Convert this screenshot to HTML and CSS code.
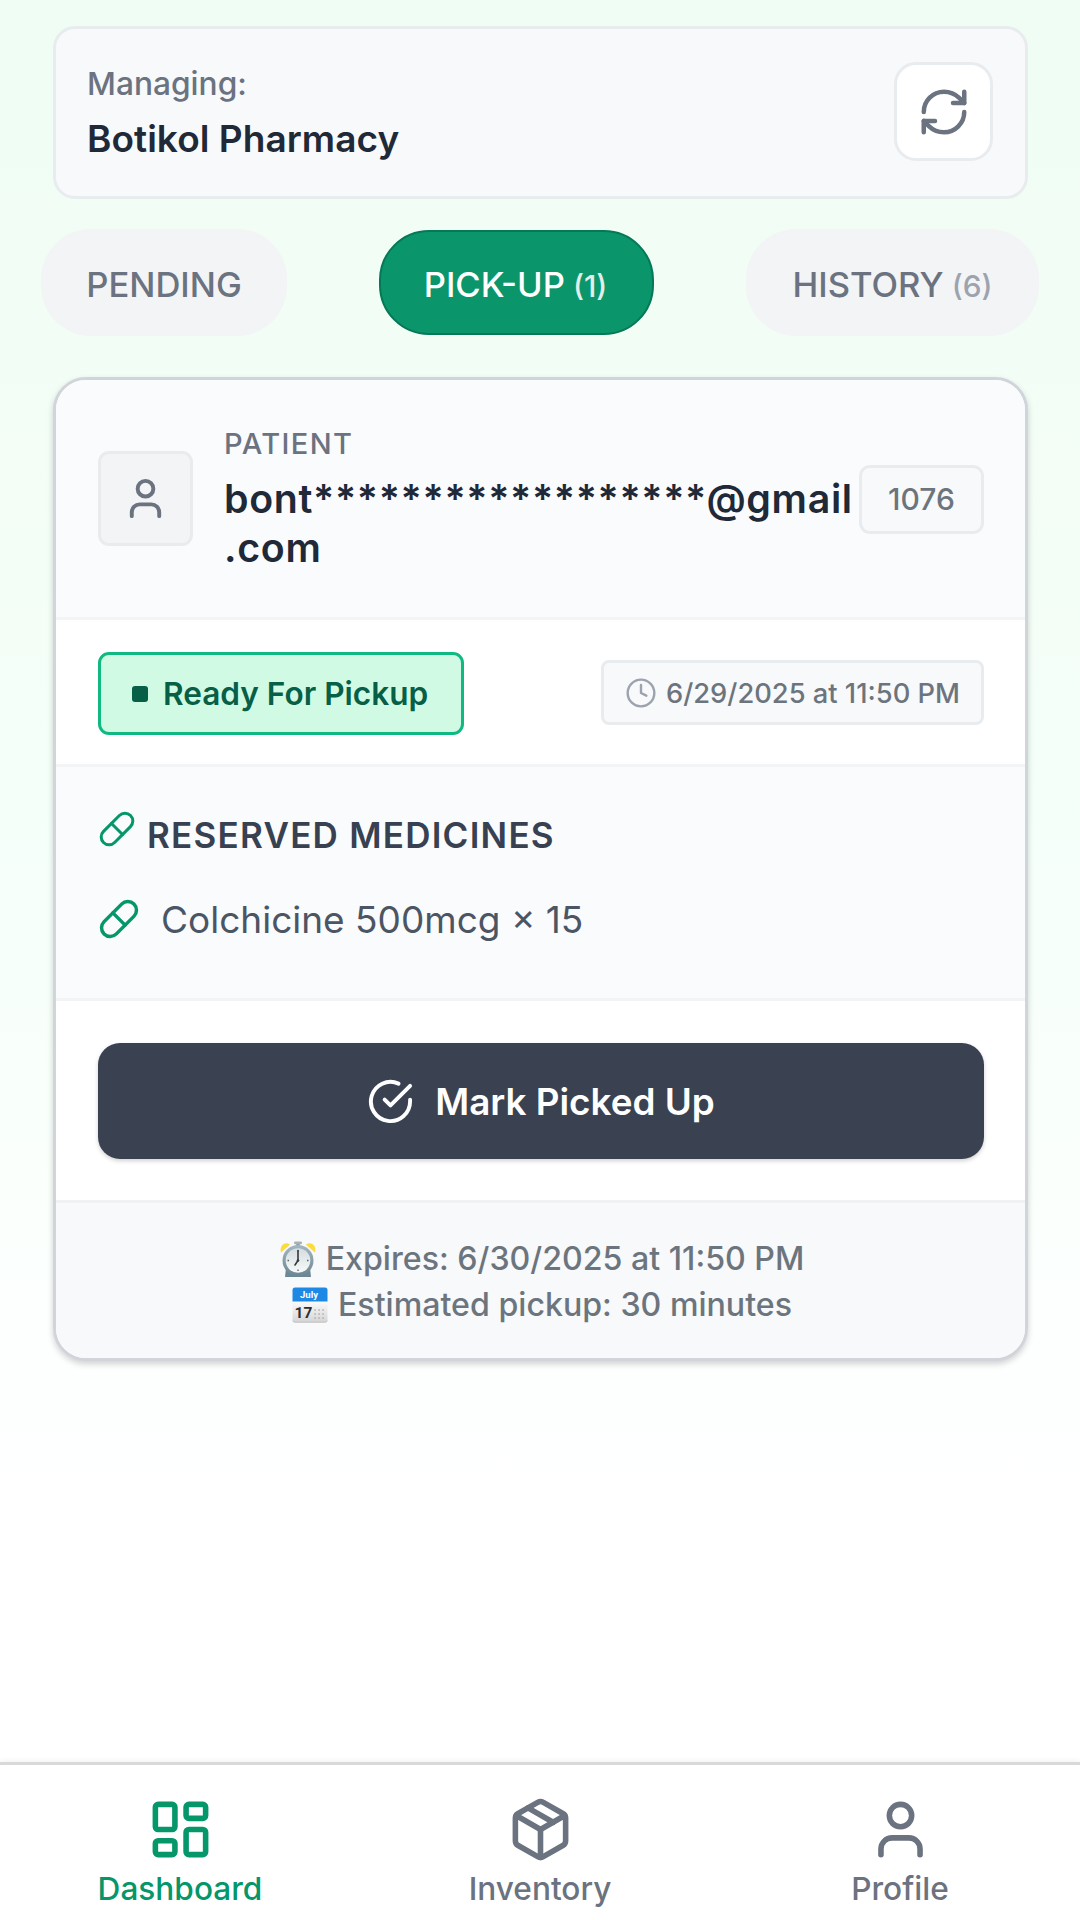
FILE: index.html
```html
<!DOCTYPE html>
<html lang="en">
<head>
<meta charset="utf-8">
<title>Botikol Pharmacy</title>
<link rel="stylesheet" href="styles.css">
</head>
<body>
<div class="screen">
  <header class="managing">
    <div class="managing-text">
      <span class="managing-label">Managing:</span>
      <span class="managing-name">Botikol Pharmacy</span>
    </div>
    <button class="refresh" aria-label="Refresh">
      <svg class="icon" width="54" height="54" viewBox="0 0 24 24"><path d="M3 12a9 9 0 0 1 9-9 9.75 9.75 0 0 1 6.74 2.74L21 8"/><path d="M21 3v5h-5"/><path d="M21 12a9 9 0 0 1-9 9 9.75 9.75 0 0 1-6.74-2.74L3 16"/><path d="M8 16H3v5"/></svg>
    </button>
  </header>

  <nav class="tabs">
    <button class="tab tab-pending"><span>PENDING</span></button>
    <button class="tab tab-active"><span>PICK-UP</span><span class="count">(1)</span></button>
    <button class="tab tab-history"><span>HISTORY</span><span class="count">(6)</span></button>
  </nav>

  <article class="card">
    <section class="patient">
      <div class="avatar">
        <svg class="icon" width="47" height="47" viewBox="0 0 24 24"><path d="M19 21v-2a4 4 0 0 0-4-4H9a4 4 0 0 0-4 4v2"/><circle cx="12" cy="7" r="4"/></svg>
      </div>
      <div class="patient-info">
        <span class="patient-label">PATIENT</span>
        <span class="patient-email">bont******************@gmail<br>.com</span>
      </div>
      <span class="code">1076</span>
    </section>

    <section class="status-row">
      <div class="status"><i class="status-dot"></i><span>Ready For Pickup</span></div>
      <div class="date">
        <svg class="icon clock" width="32" height="32" viewBox="0 0 24 24"><circle cx="12" cy="12" r="10"/><path d="M12 6v6l4 2"/></svg>
        <span>6/29/2025 at 11:50 PM</span>
      </div>
    </section>

    <section class="medicines">
      <h2 class="medicines-title">
        <svg class="icon pill" width="38" height="38" viewBox="0 0 24 24"><path d="m10.5 20.5 10-10a4.95 4.95 0 1 0-7-7l-10 10a4.95 4.95 0 1 0 7 7Z"/><path d="m8.5 8.5 7 7"/></svg>
        <span>RESERVED MEDICINES</span>
      </h2>
      <div class="medicine">
        <svg class="icon pill" width="42" height="42" viewBox="0 0 24 24"><path d="m10.5 20.5 10-10a4.95 4.95 0 1 0-7-7l-10 10a4.95 4.95 0 1 0 7 7Z"/><path d="m8.5 8.5 7 7"/></svg>
        <span>Colchicine 500mcg × 15</span>
      </div>
    </section>

    <section class="actions">
      <button class="picked-up">
        <svg class="icon" width="47" height="47" viewBox="0 0 24 24"><path d="M22 11.08V12a10 10 0 1 1-5.93-9.14"/><path d="m9 11 3 3L22 4"/></svg>
        <span>Mark Picked Up</span>
      </button>
    </section>

    <footer class="notes">
      <div class="note">
        <svg width="36" height="36" viewBox="0 0 36 36">
          <defs>
            <linearGradient id="rim" x1="0" y1="0" x2="0" y2="1"><stop offset="0" stop-color="#a3b7c1"/><stop offset="1" stop-color="#6d8794"/></linearGradient>
            <linearGradient id="face" x1="0" y1="0" x2="0" y2="1"><stop offset="0" stop-color="#d5dcdf"/><stop offset="1" stop-color="#f7fafa"/></linearGradient>
          </defs>
          <path d="M1 11.500C-1 5 5 -.5 10 3.800Z" fill="#fbdc3c"/>
          <path d="M35 11.500C37 5 31 -.5 26 3.800Z" fill="#fbdc3c"/>
          <path d="M16.300 2h3.400v4h-3.400z" fill="#84989f"/>
          <rect x="14" y="0.500" width="8" height="2.800" rx="1.400" fill="#a9b1b5"/>
          <path d="M5 36 6 27h24L31 36Z" fill="#6d8794"/>
          <circle cx="18" cy="19.500" r="15.500" fill="url(#rim)"/>
          <circle cx="18" cy="19.500" r="12.300" fill="url(#face)"/>
          <path d="M18 9v1.500M18 28.500V30M7.500 19.500H9M27 19.500h1.500" stroke="#56666d" stroke-width="1.300"/>
          <path d="M18 9.500v10l-3 4.500" fill="none" stroke="#343a40" stroke-width="1.600" stroke-linecap="round"/>
          <circle cx="18" cy="19.500" r="1.300" fill="#343a40"/>
        </svg>
        <span>Expires: 6/30/2025 at 11:50 PM</span>
      </div>
      <div class="note">
        <svg width="36" height="36" viewBox="0 0 36 36">
          <defs><linearGradient id="page" x1="0" y1="0" x2="0" y2="1"><stop offset="0.400" stop-color="#fbfbfb"/><stop offset="1" stop-color="#d4d4d4"/></linearGradient></defs>
          <rect x="0.500" y="0.500" width="35" height="35" rx="2.500" fill="url(#page)"/>
          <path d="M.5 33.500q0 2 2.500 2h30q2.500 0 2.500-2v-.8q0 2-2.500 2h-30q-2.500 0-2.500-2z" fill="#b9b9b9"/>
          <path d="M.5 14.500V3Q.5.500 3 .5h30q2.500 0 2.500 2.500v11.500z" fill="#1e88e5"/>
          <text class="cal-month" x="17" y="10.500" text-anchor="middle">July</text>
          <text class="cal-day" x="11.500" y="31.300" text-anchor="middle">17</text>
          <path d="M22.300 23h9.800M22.300 27h9.800M22.300 31h9.800" stroke="#b0b0b0" stroke-width="1.600" stroke-dasharray="1.600 2.400"/>
        </svg>
        <span>Estimated pickup: 30 minutes</span>
      </div>
    </footer>
  </article>

  <nav class="bottom-nav">
    <a class="nav-item nav-current">
      <svg class="icon" width="67" height="67" viewBox="0 0 24 24"><rect x="3" y="3" width="7" height="9" rx="1"/><rect x="14" y="3" width="7" height="5" rx="1"/><rect x="14" y="12" width="7" height="9" rx="1"/><rect x="3" y="16" width="7" height="5" rx="1"/></svg>
      <span>Dashboard</span>
    </a>
    <a class="nav-item">
      <svg class="icon" width="67" height="67" viewBox="0 0 24 24"><path d="M11 21.730a2 2 0 0 0 2 0l7-4A2 2 0 0 0 21 16V8a2 2 0 0 0-1-1.730l-7-4a2 2 0 0 0-2 0l-7 4A2 2 0 0 0 3 8v8a2 2 0 0 0 1 1.730z"/><path d="M12 22V12"/><path d="M3.290 7 12 12l8.710-5"/><path d="m7.500 4.270 9 5.150"/></svg>
      <span>Inventory</span>
    </a>
    <a class="nav-item">
      <svg class="icon" width="67" height="67" viewBox="0 0 24 24"><path d="M19 21v-2a4 4 0 0 0-4-4H9a4 4 0 0 0-4 4v2"/><circle cx="12" cy="7" r="4"/></svg>
      <span>Profile</span>
    </a>
  </nav>
</div>
</body>
</html>
```

FILE: styles.css
```css
* { box-sizing: border-box; }

body {
  margin: 0;
  font-family: Inter, "Liberation Sans", sans-serif;
  color: #6b7280;
}

button {
  font: inherit;
  color: inherit;
  border: 0;
  padding: 0;
  margin: 0;
}

.icon {
  display: block;
  flex: none;
  fill: none;
  stroke: currentColor;
  stroke-width: 2;
  stroke-linecap: round;
  stroke-linejoin: round;
}

.screen {
  width: 1080px;
  height: 1920px;
  overflow: hidden;
  display: flex;
  flex-direction: column;
  background: linear-gradient(180deg, #effdf4 0, #f2fdf5 300px, #f5fff9 800px, #fafffc 1150px, #fdfffe 1360px, #fff 1600px);
}

/* Pharmacy header */
.managing {
  flex: none;
  height: 173px;
  margin: 26px 52px 0 53px;
  padding: 0 32px 0 31px;
  display: flex;
  align-items: center;
  justify-content: space-between;
  background: #f8f9fb;
  border: 3px solid #e9ecef;
  border-radius: 22px;
}
.managing-text { display: flex; flex-direction: column; gap: 3px; padding-top: 1px; }
.managing-label { font-size: 31.700px; line-height: 48px; font-weight: 500; }
.managing-name { font-size: 37px; line-height: 56px; font-weight: 600; letter-spacing: .050px; color: #1f2937; }
.refresh {
  width: 99px;
  height: 99px;
  margin-bottom: 2px;
  display: flex;
  align-items: center;
  justify-content: center;
  background: #fff;
  border: 3px solid #e9ecef;
  border-radius: 22px;
}

/* Order tabs */
.tabs {
  flex: none;
  height: 107px;
  margin: 30px 41px 0;
  display: flex;
  align-items: center;
  justify-content: space-between;
}
.tab {
  height: 107px;
  padding: 4px 0 0;
  display: flex;
  align-items: baseline;
  justify-content: center;
  gap: 8px;
  border-radius: 50px;
  background: #f3f4f6;
  font-size: 34.600px;
  line-height: 102px;
  font-weight: 500;
}
.count { font-size: 29.800px; color: #9ca3af; }
.tab-pending { width: 246px; }
.tab-history { width: 293px; }
.tab-active {
  width: 275px;
  height: 105px;
  padding: 1px 2px 0 0;
  border: 2px solid #047857;
  background: #0a966a;
  color: #fff;
}
.tab-active .count { color: #e3eeea; }

/* Reservation card */
.card {
  flex: none;
  height: 984px;
  margin: 41px 52px 0 53px;
  display: flex;
  flex-direction: column;
  overflow: hidden;
  background: #fff;
  border: 3px solid #d1d5db;
  border-radius: 33px;
  box-shadow: 0 3px 6px rgba(0, 0, 0, .18);
}
.patient {
  height: 240px;
  padding: 0 41px 0 42px;
  display: flex;
  align-items: center;
  background: #fafbfd;
  border-bottom: 3px solid #f3f4f6;
}
.avatar {
  width: 95px;
  height: 95px;
  flex: none;
  display: flex;
  align-items: center;
  justify-content: center;
  background: #f3f4f6;
  border: 3px solid #e9ebed;
  border-radius: 11px;
}
.patient-info { flex: 1; width: 0; margin-left: 31px; padding-bottom: 3px; display: flex; flex-direction: column; white-space: nowrap; }
.patient-label { font-size: 29px; line-height: 44px; font-weight: 500; letter-spacing: 1.400px; margin-bottom: 8px; }
.patient-email { font-size: 39.300px; line-height: 49px; font-weight: 600; color: #1f2937; letter-spacing: .680px; }
.code {
  width: 125px;
  height: 69px;
  flex: none;
  margin-top: 2px;
  line-height: 63px;
  text-align: center;
  font-size: 30px;
  font-weight: 500;
  color: #6c757d;
  background: #f8f9fb;
  border: 3px solid #e9ecef;
  border-radius: 11px;
}

.status-row {
  height: 147px;
  padding: 0 41px 0 42px;
  display: flex;
  align-items: center;
  justify-content: space-between;
  border-bottom: 3px solid #f3f4f6;
}
.status {
  width: 366px;
  height: 83px;
  margin-top: 2px;
  padding-left: 31px;
  display: flex;
  align-items: center;
  gap: 15px;
  background: #d1fae5;
  border: 3px solid #10b981;
  border-radius: 11px;
  font-size: 31.600px;
  font-weight: 600;
  color: #065f46;
}
.status-dot { width: 16px; height: 16px; margin-top: 2px; border-radius: 3px; background: #065f46; }
.date {
  width: 383px;
  height: 65px;
  padding: 1px 0 0 21px;
  display: flex;
  align-items: center;
  gap: 9px;
  background: #f8f9fb;
  border: 3px solid #e9ecef;
  border-radius: 8px;
  font-size: 27.300px;
  font-weight: 500;
  color: #6c757d;
  white-space: nowrap;
}
.date span { padding-top: 1px; }
.clock { color: #9ca3af; stroke-width: 1.800; }

.medicines {
  height: 234px;
  padding: 43px 41px 0 42px;
  background: #fafbfd;
  border-bottom: 3px solid #f3f4f6;
}
.pill { color: #059669; }
.medicines-title {
  height: 50px;
  margin: 0;
  display: flex;
  gap: 11px;
  font-size: 35px;
  line-height: 50px;
  font-weight: 600;
  letter-spacing: 1.250px;
  color: #374151;
}
.medicines-title .pill { stroke-width: 1.900; }
.medicine {
  height: 50px;
  margin-top: 34px;
  display: flex;
  align-items: center;
  gap: 21px;
  font-size: 37px;
  color: #4b5563;
}

.actions {
  height: 202px;
  padding: 42px 41px 0 42px;
  border-bottom: 3px solid #f0f1f3;
}
.picked-up {
  width: 886px;
  height: 116px;
  display: flex;
  align-items: center;
  justify-content: center;
  gap: 21px;
  background: #3a4252;
  border-radius: 22px;
  box-shadow: 0 2px 4px rgba(0, 0, 0, .18);
  font-size: 36.800px;
  font-weight: 600;
  color: #fff;
}

.notes {
  flex: 1;
  padding-top: 33px;
  background: #f8f9fb;
  font-size: 32.150px;
  line-height: 46px;
  font-weight: 500;
  color: #6c757d;
}
.note { height: 46px; padding-left: 3px; display: flex; align-items: center; justify-content: center; gap: 10px; }
.cal-month { font: bold 9.500px Roboto, sans-serif; fill: #fff; }
.cal-day { font: bold 15.500px Roboto, sans-serif; fill: #2f2f2f; }

/* Bottom navigation */
.bottom-nav {
  flex: none;
  height: 158px;
  margin-top: auto;
  display: grid;
  grid-template-columns: repeat(3, 1fr);
  background: #fff;
  border-top: 3px solid #d9d9d9;
  box-shadow: 0 -1px 6px rgba(0, 0, 0, .06);
}
.nav-item {
  padding-top: 31px;
  display: flex;
  flex-direction: column;
  align-items: center;
  font-size: 31.600px;
  line-height: 40px;
  font-weight: 500;
}
.nav-item span { margin-top: 6px; }
.nav-current { color: #059669; }
```
